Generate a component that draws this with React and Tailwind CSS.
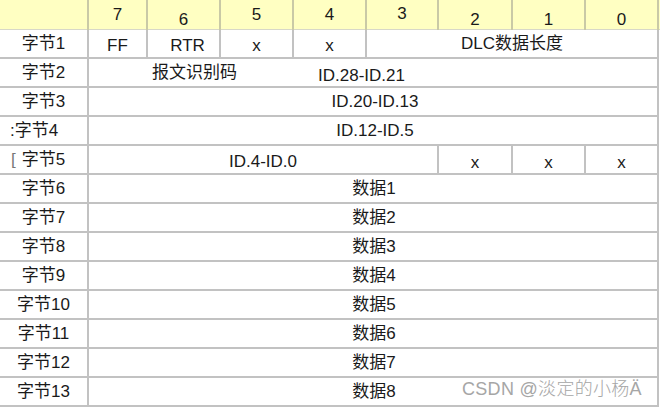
import React from "react";

const cols = "grid grid-cols-[89px_59px_73px_73px_73px_72px_74px_73px_73px]";
const cell = "border-r-2 border-b-2 border-[#c2c2c2] flex justify-center";

function Row({ label, labelCls = "justify-center", children }) {
  return (
    <div className={`${cols} h-[29px]`}>
      <div className={`border-r-2 border-b-2 border-[#c2c2c2] flex items-center ${labelCls}`}>{label}</div>
      {children}
    </div>
  );
}

export default function App() {
  const header = [
    ["7", "pt-[5px]"],
    ["6", "pt-[10px]"],
    ["5", "pt-[5px]"],
    ["4", "pt-[5px]"],
    ["3", "pt-[4px]"],
    ["2", "pt-[10px]"],
    ["1", "pt-[10px]"],
    ["0", "pt-[10px]"],
  ];
  return (
    <div
      className="relative w-[660px] h-[409px] bg-white text-[#1a1a1a] text-[17px] leading-[20px] overflow-hidden"
      style={{ fontFamily: '"Liberation Sans", "Noto Sans CJK SC", sans-serif' }}
    >
      <div className={`${cols} h-[30px] bg-[#ffffc2] border-b border-[#d8d8c8]`}>
        <div className="border-r-2 border-[#c9c9a6]" />
        {header.map(([t, p]) => (
          <div key={t} className={`border-r-2 border-[#c9c9a6] flex justify-center ${p}`}>
            {t}
          </div>
        ))}
      </div>

      <Row label="字节1">
        <div className={`${cell} items-center pt-[5px]`}>FF</div>
        <div className={`${cell} items-center pt-[5px] pl-[8px]`}>RTR</div>
        <div className={`${cell} items-center pt-[5px]`}>x</div>
        <div className={`${cell} items-center pt-[5px]`}>x</div>
        <div className={`${cell} items-center col-span-4`}>DLC数据长度</div>
      </Row>

      <Row label="字节2">
        <div className={`border-r-2 border-b-2 border-[#c2c2c2] col-span-8 flex items-center pl-[63px]`}>
          <span>报文识别码</span>
          <span className="ml-[81px] mt-[7px]">ID.28-ID.21</span>
        </div>
      </Row>

      <Row label="字节3">
        <div className={`${cell} items-center col-span-8 pl-[4px]`}>ID.20-ID.13</div>
      </Row>

      <Row label=":字节4" labelCls="justify-start pl-[10px]">
        <div className={`${cell} items-center col-span-8 pl-[4px]`}>ID.12-ID.5</div>
      </Row>

      <Row label={<><span className="text-[#777]">[</span><span className="ml-[6px]">字节5</span></>} labelCls="justify-start pl-[11px]">
        <div className={`${cell} items-center col-span-5 pt-[5px]`}>ID.4-ID.0</div>
        <div className={`${cell} items-center pt-[7px]`}>x</div>
        <div className={`${cell} items-center pt-[7px]`}>x</div>
        <div className={`${cell} items-center pt-[7px]`}>x</div>
      </Row>

      {[6, 7, 8, 9, 10, 11, 12, 13].map((n) => (
        <Row key={n} label={`字节${n}`}>
          <div className={`${cell} items-center col-span-8 pl-[2px]`}>数据{n - 5}</div>
        </Row>
      ))}

      <div
        className="absolute left-[462px] top-[378px] text-[18px] leading-[22px] text-[#a6a6a6] tracking-[0.3px] font-light"
        style={{ fontFamily: '"Liberation Sans", "Noto Sans CJK SC", sans-serif' }}
      >
        CSDN @淡定的小杨Ä
      </div>
    </div>
  );
}
